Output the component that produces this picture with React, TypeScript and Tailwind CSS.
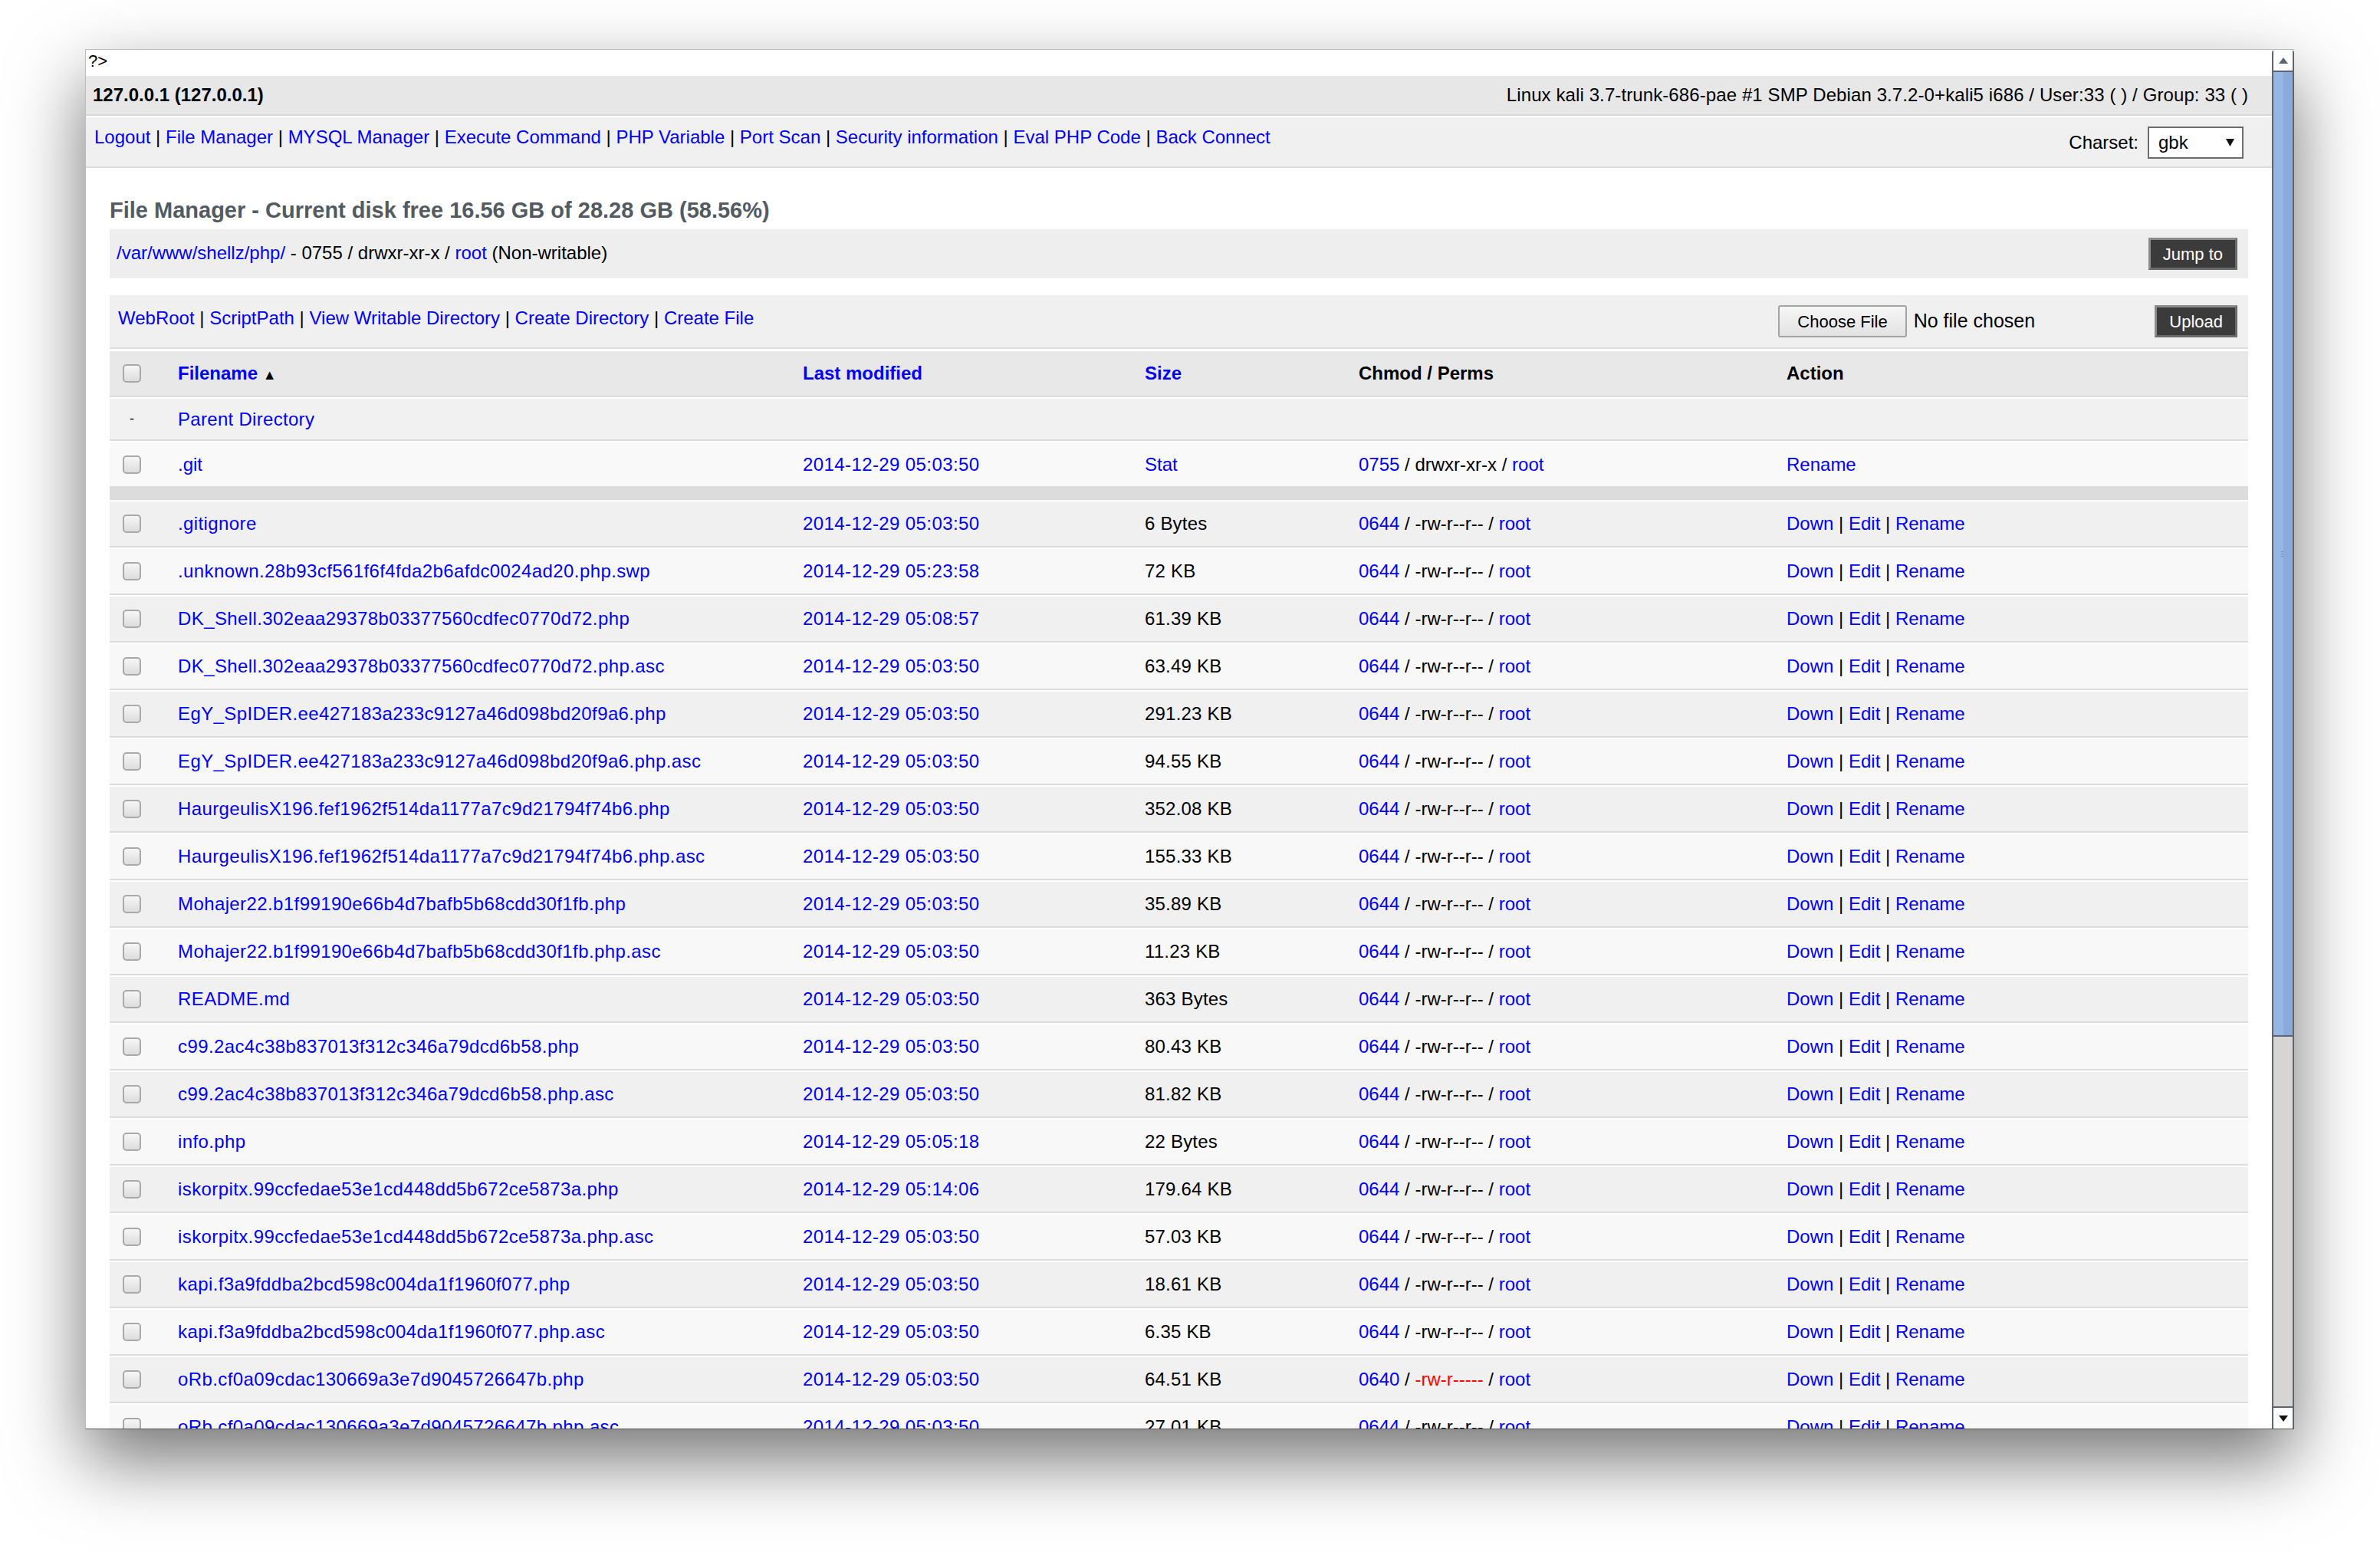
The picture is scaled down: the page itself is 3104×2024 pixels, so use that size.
import React from "react";

interface FileRow {
  name: string;
  time: string;
  size: string;
  mode?: string;
  perms?: string;
  warn?: boolean;
}

const files: FileRow[] = [
  { name: ".gitignore", time: "2014-12-29 05:03:50", size: "6 Bytes" },
  { name: ".unknown.28b93cf561f6f4fda2b6afdc0024ad20.php.swp", time: "2014-12-29 05:23:58", size: "72 KB" },
  { name: "DK_Shell.302eaa29378b03377560cdfec0770d72.php", time: "2014-12-29 05:08:57", size: "61.39 KB" },
  { name: "DK_Shell.302eaa29378b03377560cdfec0770d72.php.asc", time: "2014-12-29 05:03:50", size: "63.49 KB" },
  { name: "EgY_SpIDER.ee427183a233c9127a46d098bd20f9a6.php", time: "2014-12-29 05:03:50", size: "291.23 KB" },
  { name: "EgY_SpIDER.ee427183a233c9127a46d098bd20f9a6.php.asc", time: "2014-12-29 05:03:50", size: "94.55 KB" },
  { name: "HaurgeulisX196.fef1962f514da1177a7c9d21794f74b6.php", time: "2014-12-29 05:03:50", size: "352.08 KB" },
  { name: "HaurgeulisX196.fef1962f514da1177a7c9d21794f74b6.php.asc", time: "2014-12-29 05:03:50", size: "155.33 KB" },
  { name: "Mohajer22.b1f99190e66b4d7bafb5b68cdd30f1fb.php", time: "2014-12-29 05:03:50", size: "35.89 KB" },
  { name: "Mohajer22.b1f99190e66b4d7bafb5b68cdd30f1fb.php.asc", time: "2014-12-29 05:03:50", size: "11.23 KB" },
  { name: "README.md", time: "2014-12-29 05:03:50", size: "363 Bytes" },
  { name: "c99.2ac4c38b837013f312c346a79dcd6b58.php", time: "2014-12-29 05:03:50", size: "80.43 KB" },
  { name: "c99.2ac4c38b837013f312c346a79dcd6b58.php.asc", time: "2014-12-29 05:03:50", size: "81.82 KB" },
  { name: "info.php", time: "2014-12-29 05:05:18", size: "22 Bytes" },
  { name: "iskorpitx.99ccfedae53e1cd448dd5b672ce5873a.php", time: "2014-12-29 05:14:06", size: "179.64 KB" },
  { name: "iskorpitx.99ccfedae53e1cd448dd5b672ce5873a.php.asc", time: "2014-12-29 05:03:50", size: "57.03 KB" },
  { name: "kapi.f3a9fddba2bcd598c004da1f1960f077.php", time: "2014-12-29 05:03:50", size: "18.61 KB" },
  { name: "kapi.f3a9fddba2bcd598c004da1f1960f077.php.asc", time: "2014-12-29 05:03:50", size: "6.35 KB" },
  { name: "oRb.cf0a09cdac130669a3e7d9045726647b.php", time: "2014-12-29 05:03:50", size: "64.51 KB", mode: "0640", perms: "-rw-r-----", warn: true },
  { name: "oRb.cf0a09cdac130669a3e7d9045726647b.php.asc", time: "2014-12-29 05:03:50", size: "27.01 KB" },
];

const navLinks = [
  "Logout",
  "File Manager",
  "MYSQL Manager",
  "Execute Command",
  "PHP Variable",
  "Port Scan",
  "Security information",
  "Eval PHP Code",
  "Back Connect",
];

const toolLinks = ["WebRoot", "ScriptPath", "View Writable Directory", "Create Directory", "Create File"];

const cols = "grid grid-cols-[89px_815px_446px_279px_558px_1fr] items-center";

function Sep() {
  return <span className="text-black"> | </span>;
}

function LinkList({ items }: { items: string[] }) {
  return (
    <div className="whitespace-pre">
      {items.map((l, i) => (
        <span key={l}>
          {i > 0 && <Sep />}
          <span className="text-[#0000ff]">{l}</span>
        </span>
      ))}
    </div>
  );
}

function Check() {
  return (
    <div className="w-[58px] flex justify-center">
      <div className="w-[24px] h-[24px] rounded-[5px] border-2 border-[#a9a9a9] bg-gradient-to-b from-[#f6f6f6] to-[#dddddd]" />
    </div>
  );
}

function DarkButton({ label }: { label: string }) {
  return (
    <div className="h-[42px] px-[16px] flex items-center border-[3px] border-t-[#8a8a8a] border-l-[#8a8a8a] border-r-[#6a6a6a] border-b-[#6a6a6a] bg-[#3b3b3b] text-white text-[22px]">
      {label}
    </div>
  );
}

function Scrollbar() {
  return (
    <div className="w-[29px] flex flex-col border-x-2 border-[#5d6570] rounded-t-[4px] bg-[#d7d5d3]">
      <div className="h-[29px] shrink-0 bg-[#fdfdfd] border-b-2 border-[#5d6570] flex items-center justify-center">
        <svg width="12" height="8" viewBox="0 0 12 8">
          <path d="M6 0 L12 8 L0 8 Z" fill="#5d6570" />
        </svg>
      </div>
      <div className="h-[1258px] shrink-0 flex border-b-2 border-[#5d6570]">
        <div className="flex-1 bg-[#95b7e6] flex items-center justify-end">
          <div className="flex flex-col gap-[2px] -mr-[5px]">
            <div className="w-[8px] h-[1px] bg-[#6f8fbf]" />
            <div className="w-[8px] h-[1px] bg-[#6f8fbf]" />
            <div className="w-[8px] h-[1px] bg-[#6f8fbf]" />
          </div>
        </div>
        <div className="w-[12px] bg-[#8aaadb]" />
      </div>
      <div className="flex-1" />
      <div className="h-[29px] shrink-0 bg-[#fdfdfd] border-t-2 border-[#5d6570] flex items-center justify-center">
        <svg width="12" height="8" viewBox="0 0 12 8">
          <path d="M0 0 L12 0 L6 8 Z" fill="#111" />
        </svg>
      </div>
    </div>
  );
}

function Perm({ mode, perms, warn }: { mode: string; perms: string; warn?: boolean }) {
  return (
    <div className="whitespace-pre">
      <span className="text-[#0000ff]">{mode}</span>
      <span> / </span>
      <span className={warn ? "text-[#ff0000]" : "text-black"}>{perms}</span>
      <span> / </span>
      <span className="text-[#0000ff]">root</span>
    </div>
  );
}

export default function App() {
  return (
    <div className="w-[3104px] h-[2024px] bg-white overflow-hidden pt-[64px] pl-[111px] font-['Liberation_Sans',Arial,sans-serif] text-[24px] text-black">
      <div className="w-[2881px] h-[1800px] flex border-t border-l border-[#bdbdbd] border-b border-b-[#555] shadow-[0_40px_90px_rgba(0,0,0,0.55)] bg-white">
        <div className="flex-1 min-w-0 overflow-hidden flex flex-col">
          <div className="h-[34px] shrink-0 pl-[3px] text-[22px] leading-[30px]">?&gt;</div>

          <div className="h-[52px] shrink-0 bg-[#e7e7e7] border-b-2 border-[#d7d7d7] flex items-center justify-between pl-[9px] pr-[31px]">
            <span className="font-bold">127.0.0.1 (127.0.0.1)</span>
            <span className="tracking-[0.1px]">Linux kali 3.7-trunk-686-pae #1 SMP Debian 3.7.2-0+kali5 i686 / User:33 ( ) / Group: 33 ( )</span>
          </div>

          <div className="mt-[2px] h-[66px] shrink-0 bg-[#f0f0f0] border-b-2 border-[#dcdcdc] flex items-start justify-between pl-[11px] pr-[37px] pt-[12px]">
            <div className="-mt-[4px]">
              <LinkList items={navLinks} />
            </div>
            <div className="flex items-center gap-[12px]">
              <span>Charset:</span>
              <div className="w-[125px] h-[42px] bg-white border-2 border-[#6b6b6b] flex items-center justify-between pl-[12px] pr-[10px]">
                <span>gbk</span>
                <svg width="11" height="10" viewBox="0 0 11 10">
                  <path d="M0 0 L11 0 L5.5 10 Z" fill="#111" />
                </svg>
              </div>
            </div>
          </div>

          <div className="px-[31px] pt-[38px] flex flex-col">
            <h2 className="h-[34px] leading-[34px] text-[29px] font-bold text-[#525a62] mb-[8px]">
              File Manager - Current disk free 16.56 GB of 28.28 GB (58.56%)
            </h2>

            <div className="h-[64px] bg-[#eeeeee] flex items-center justify-between pl-[9px] pr-[14px]">
              <div className="whitespace-pre -mt-[2px]">
                <span className="text-[#0000ff]">/var/www/shellz/php/</span>
                <span> - 0755 / drwxr-xr-x / </span>
                <span className="text-[#0000ff]">root</span>
                <span> (Non-writable)</span>
              </div>
              <DarkButton label="Jump to" />
            </div>

            <div className="mt-[22px] h-[70px] bg-[#f0f0f0] border-b-2 border-[#dcdcdc] flex items-center justify-between pl-[11px] pr-[14px]">
              <div className="-mt-[8px]">
                <LinkList items={toolLinks} />
              </div>
              <div className="flex items-center">
                <div className="w-[491px] flex items-center gap-[9px]">
                  <div className="h-[42px] px-[23px] flex items-center rounded-[3px] border-2 border-[#a3a3a3] bg-gradient-to-b from-[#f7f7f7] to-[#e2e2e2] text-[22px]">
                    Choose File
                  </div>
                  <span className="text-[25px]">No file chosen</span>
                </div>
                <DarkButton label="Upload" />
              </div>
            </div>

            <div className="mt-[3px] h-[60px] bg-[#e8e8e8] border-b-2 border-[#dcdcdc] font-bold">
              <div className={cols + " h-full"}>
                <Check />
                <div className="text-[#0000ff]">
                  Filename <span className="text-black text-[18px]">▲</span>
                </div>
                <div className="text-[#0000ff]">Last modified</div>
                <div className="text-[#0000ff]">Size</div>
                <div>Chmod / Perms</div>
                <div>Action</div>
              </div>
            </div>

            <div className="h-[57px] border-t-2 border-white border-b-2 border-b-[#dcdcdc] bg-[#f1f1f1]">
              <div className={cols + " h-full"}>
                <div className="w-[58px] text-center text-[18px]">-</div>
                <div className="text-[#0000ff] tracking-[0.3px]">Parent Directory</div>
              </div>
            </div>

            <div className="h-[59px] border-t-2 border-white bg-[#f9f9f9]">
              <div className={cols + " h-full"}>
                <Check />
                <div className="text-[#0000ff]">.git</div>
                <div className="text-[#0000ff] tracking-[0.4px]">2014-12-29 05:03:50</div>
                <div className="text-[#0000ff]">Stat</div>
                <Perm mode="0755" perms="drwxr-xr-x" />
                <div className="text-[#0000ff]">Rename</div>
              </div>
            </div>

            <div className="h-[18px] bg-[#dcdcdc]" />

            {files.map((f, i) => (
              <div
                key={f.name}
                className={
                  "h-[62px] shrink-0 border-t-2 border-white border-b-2 border-b-[#dcdcdc] " +
                  (i % 2 === 0 ? "bg-[#f0f0f0]" : "bg-[#f8f8f8]")
                }
              >
                <div className={cols + " h-full"}>
                  <Check />
                  <div className="text-[#0000ff] whitespace-nowrap tracking-[0.4px]">{f.name}</div>
                  <div className="text-[#0000ff] tracking-[0.4px]">{f.time}</div>
                  <div className="tracking-[0.2px]">{f.size}</div>
                  <Perm mode={f.mode ?? "0644"} perms={f.perms ?? "-rw-r--r--"} warn={f.warn} />
                  <div className="whitespace-pre">
                    <span className="text-[#0000ff]">Down</span>
                    <Sep />
                    <span className="text-[#0000ff]">Edit</span>
                    <Sep />
                    <span className="text-[#0000ff]">Rename</span>
                  </div>
                </div>
              </div>
            ))}
          </div>
        </div>
        <Scrollbar />
      </div>
    </div>
  );
}
